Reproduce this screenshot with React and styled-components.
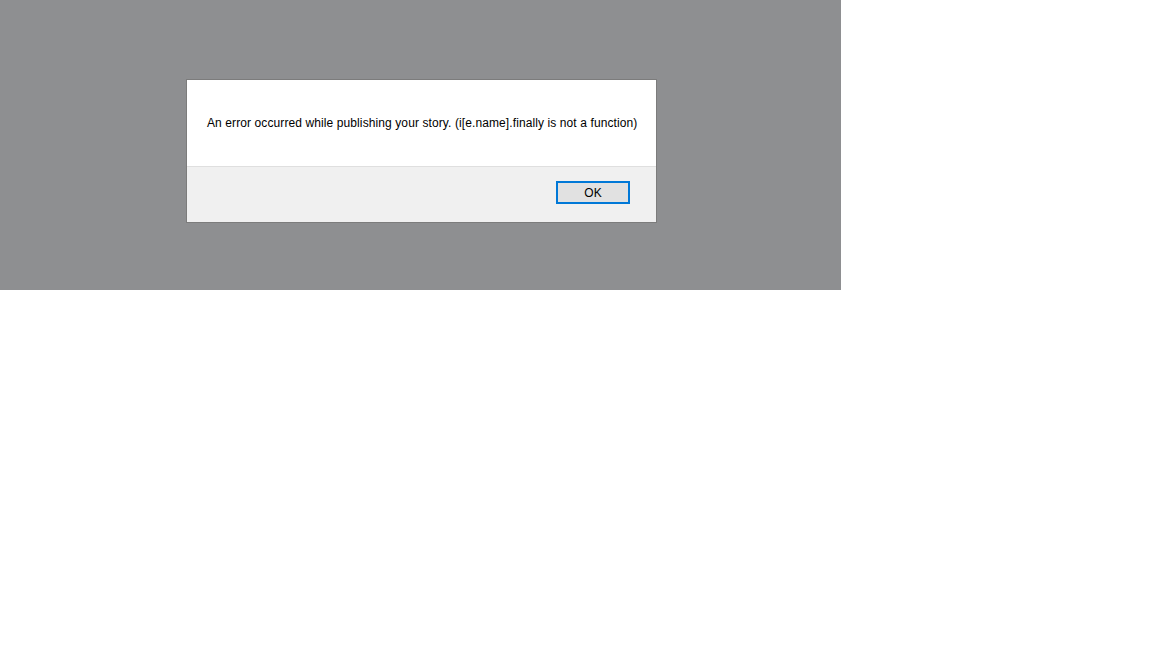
import React from 'react'
import styled, {createGlobalStyle} from 'styled-components'

const Global = createGlobalStyle`
  html, body {
    margin: 0;
    padding: 0;
    background: #ffffff;
    font-family: "Liberation Sans", Arial, sans-serif;
  }
`

const Backdrop = styled.div`
  width: 841px;
  height: 290px;
  background: #8e8f91;
  display: flex;
  justify-content: flex-start;
  align-items: flex-start;
  padding: 79px 0 0 186px;
  box-sizing: border-box;
`

const Dialog = styled.div`
  width: 471px;
  box-sizing: border-box;
  border: 1px solid #7c7c7c;
  background: #ffffff;
  display: flex;
  flex-direction: column;
`

const Message = styled.div`
  height: 87px;
  box-sizing: border-box;
  padding: 0 0 0 20px;
  display: flex;
  align-items: center;
  font-size: 12px;
  letter-spacing: 0.1px;
  white-space: nowrap;
  color: #000000;
  border-bottom: 1px solid #dfdfdf;
`

const Footer = styled.div`
  height: 55px;
  box-sizing: border-box;
  background: #f0f0f0;
  display: flex;
  justify-content: flex-end;
  align-items: flex-start;
  padding: 14px 26px 0 0;
`

const Button = styled.button`
  width: 74px;
  height: 23px;
  box-sizing: border-box;
  border: 2px solid #0078d7;
  background: #e1e1e1;
  font-family: "Liberation Sans", Arial, sans-serif;
  font-size: 12px;
  color: #000000;
  padding: 0;
  display: flex;
  align-items: center;
  justify-content: center;
`

export default function App() {
  return (
    <>
      <Global />
      <Backdrop>
        <Dialog>
          <Message>
            An error occurred while publishing your story. (i[e.name].finally is not a function)
          </Message>
          <Footer>
            <Button>OK</Button>
          </Footer>
        </Dialog>
      </Backdrop>
    </>
  )
}
